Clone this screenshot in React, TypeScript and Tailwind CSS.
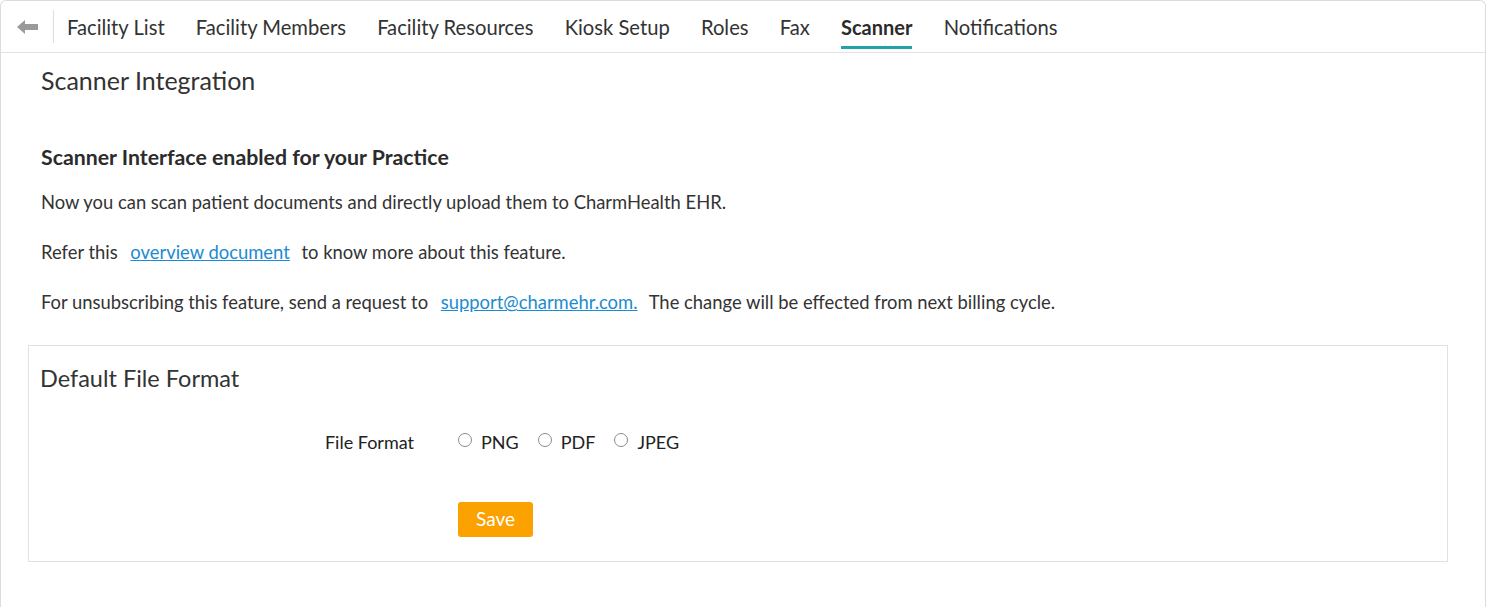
import React from "react";

const tabs = ["Facility List", "Facility Members", "Facility Resources", "Kiosk Setup", "Roles", "Fax", "Scanner", "Notifications"];

export default function App() {
  return (
    <div className="w-[1486px] h-[607px] bg-white overflow-hidden" style={{ fontFamily: "Lato, 'Open Sans', sans-serif" }}>
      <div className="h-full border-l border-r border-t border-[#dcdcdc] rounded-tl-[6px] rounded-tr-[6px] text-[#333]">
        <div className="h-[52px] border-b border-[#e2e2e2] flex items-center">
          <div className="w-[52px] flex items-center justify-center pl-[1px]">
            <svg width="21" height="14" viewBox="0 0 21 14">
              <path d="M0 7 L8 0 L8 4 L21 4 L21 10 L8 10 L8 14 Z" fill="#9a9a9a" />
            </svg>
          </div>
          <div className="w-px h-[33px] bg-[#dedede]" />
          <div className="flex items-center gap-[31.2px] pl-[13px] h-full pt-[1px]">
            {tabs.map((t) => (
              <div key={t} className="relative h-full flex items-center">
                <span className={t === "Scanner" ? "text-[20px] font-bold text-[#2b2b2b]" : "text-[20.2px] text-[#333]"}>{t}</span>
                {t === "Scanner" && <div className="absolute left-0 right-0 bottom-[3px] h-[3px] bg-[#21a3a8]" />}
              </div>
            ))}
          </div>
        </div>
        <div className="pl-[40px] pt-[12px]">
          <h1 className="text-[25px] leading-[30px] text-[#333]">Scanner Integration</h1>
          <h2 className="mt-[49px] text-[21.3px] font-bold text-[#2b2b2b] leading-[26px]">Scanner Interface enabled for your Practice</h2>
          <p className="mt-[20px] text-[18.4px] leading-[24px]">Now you can scan patient documents and directly upload them to CharmHealth EHR.</p>
          <p className="mt-[26px] text-[18.4px] leading-[24px]">
            Refer this <a className="ml-[8px] mr-[7px] text-[#1b8bd2] underline">overview document</a> to know more about this feature.
          </p>
          <p className="mt-[26px] text-[18.4px] leading-[24px]">
            For unsubscribing this feature, send a request to <a className="ml-[8px] mr-[7px] text-[#1b8bd2] underline">support@charmehr.com.</a> The change will be effected from next billing cycle.
          </p>
        </div>
        <div className="ml-[27px] mt-[31px] w-[1420px] h-[217px] border border-[#e2e2e2]">
          <div className="pl-[11px] pt-[17px] text-[23.5px] leading-[30px] text-[#333]">Default File Format</div>
          <div className="flex items-center mt-[37px] h-[24px]">
            <div className="w-[429px] text-right pr-[44px] text-[18px] text-[#222]">File Format</div>
            <div className="flex items-center text-[18px] text-[#222]">
              {["PNG", "PDF", "JPEG"].map((f) => (
                <label key={f} className="flex items-center mr-[19px]">
                  <span className="w-[14px] h-[14px] rounded-full border border-[#8a8a8a] bg-white mr-[9px] -mt-[4px]" />
                  {f}
                </label>
              ))}
            </div>
          </div>
          <div className="ml-[429px] mt-[48px]">
            <button className="w-[75px] h-[35px] rounded-[3px] bg-[#fba100] text-white text-[19px]">Save</button>
          </div>
        </div>
      </div>
    </div>
  );
}
